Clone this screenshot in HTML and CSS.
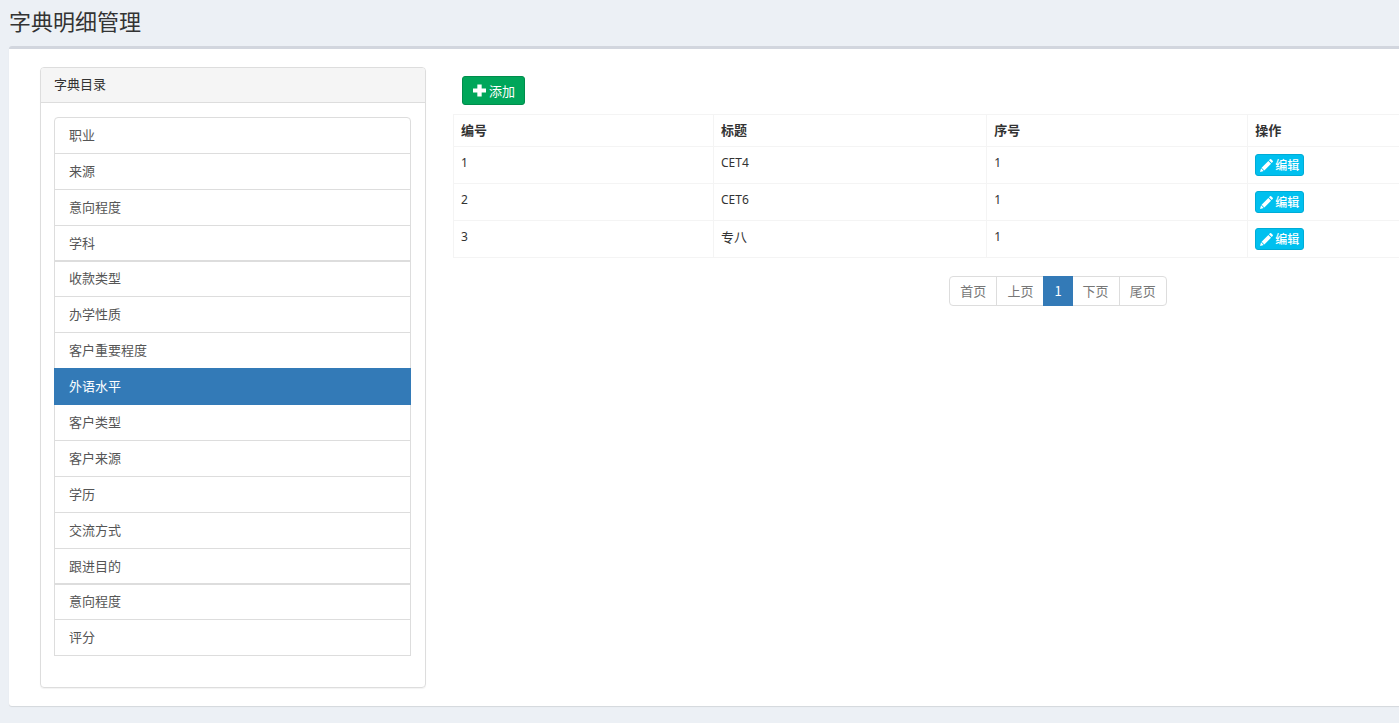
FILE: index.html
```html
<!DOCTYPE html>
<html lang="zh-CN">
<head>
<meta charset="utf-8">
<title>字典明细管理</title>
<link rel="stylesheet" href="styles.css">
</head>
<body>
<svg class="sprite" aria-hidden="true">
  <symbol id="plus" viewBox="0 0 12 12"><path d="M4 0.5h4v3.7h4v3.6H8v3.7H4V7.8H0V4.2h4z"/></symbol>
  <symbol id="pencil" viewBox="0 0 12 12"><path d="M9.200 .3a.8.8 0 0 1 1.100 0l1.400 1.400a.8.8 0 0 1 0 1.100l-.9.9-2.500-2.500zM7.700 1.800l2.500 2.500-6.200 6.200-2.500-2.500zM1 8.600l2.400 2.400L0 12z"/></symbol>
</svg>
<h1 class="page-title">字典明细管理</h1>
<main class="box">
  <section class="panel">
    <h2 class="panel-heading">字典目录</h2>
    <nav class="list-group">
      <a class="item" href="#">职业</a>
      <a class="item" href="#">来源</a>
      <a class="item" href="#">意向程度</a>
      <a class="item group-end" href="#">学科</a>
      <a class="item group-start" href="#">收款类型</a>
      <a class="item" href="#">办学性质</a>
      <a class="item" href="#">客户重要程度</a>
      <a class="item active" href="#">外语水平</a>
      <a class="item" href="#">客户类型</a>
      <a class="item" href="#">客户来源</a>
      <a class="item" href="#">学历</a>
      <a class="item" href="#">交流方式</a>
      <a class="item group-end" href="#">跟进目的</a>
      <a class="item group-start" href="#">意向程度</a>
      <a class="item" href="#">评分</a>
    </nav>
  </section>
  <section class="details">
    <button type="button" class="btn btn-add"><svg class="icon"><use href="#plus"/></svg>添加</button>
    <table class="table">
      <colgroup><col class="col-id"><col class="col-title"><col class="col-order"><col></colgroup>
      <thead>
        <tr><th>编号</th><th>标题</th><th>序号</th><th>操作</th></tr>
      </thead>
      <tbody>
        <tr><td>1</td><td>CET4</td><td>1</td><td><button type="button" class="btn btn-edit"><svg class="icon"><use href="#pencil"/></svg>编辑</button></td></tr>
        <tr><td>2</td><td>CET6</td><td>1</td><td><button type="button" class="btn btn-edit"><svg class="icon"><use href="#pencil"/></svg>编辑</button></td></tr>
        <tr><td>3</td><td class="cjk">专八</td><td>1</td><td><button type="button" class="btn btn-edit"><svg class="icon"><use href="#pencil"/></svg>编辑</button></td></tr>
      </tbody>
    </table>
    <nav class="pagination">
      <a class="page" href="#">首页</a>
      <a class="page" href="#">上页</a>
      <a class="page current" href="#">1</a>
      <a class="page" href="#">下页</a>
      <a class="page" href="#">尾页</a>
    </nav>
  </section>
</main>
</body>
</html>
```
FILE: styles.css
```css
* { box-sizing: border-box; }
body {
  margin: 0;
  padding: 0 0 16px 9px;
  background: #ecf0f5;
  color: #333;
  font: 13px/18px "Noto Sans CJK SC", sans-serif;
}
a { color: inherit; text-decoration: none; }
svg { fill: currentColor; }
.sprite { display: none; }
.page-title {
  margin: 0;
  padding: 7px 0 13px;
  font-size: 22px;
  line-height: 26px;
  font-weight: 400;
}
.box {
  display: flex;
  align-items: flex-start;
  gap: 27px;
  padding: 18px 0 18px 31px;
  background: #fff;
  border-top: 3px solid #d2d6de;
  border-radius: 3px 0 0 3px;
  box-shadow: 0 1px 1px rgba(0, 0, 0, .1);
}
.panel {
  flex: 0 0 386px;
  border: 1px solid #ddd;
  border-radius: 4px;
  box-shadow: 0 1px 1px rgba(0, 0, 0, .05);
}
.panel-heading {
  margin: 0;
  padding: 7px 13px 9px;
  background: #f5f5f5;
  border-bottom: 1px solid #ddd;
  border-radius: 3px 3px 0 0;
  font-size: 13px;
  line-height: 18px;
  font-weight: 400;
}
.list-group {
  display: flex;
  flex-direction: column;
  padding: 14px 14px 31px 13px;
}
.item {
  height: 37px;
  padding: 8px 14px;
  border: 1px solid #ddd;
  color: #555;
}
.item + .item { margin-top: -1px; }
.item:first-child { border-radius: 4px 4px 0 0; }
.item.group-end { height: 36px; }
.item.group-start { height: 36px; margin-top: 0; padding-top: 7px; }
.item.active {
  z-index: 1;
  background: #337ab7;
  border-color: #337ab7;
  color: #fff;
}
.details { flex: 1; min-width: 0; padding-top: 9px; }
.btn {
  display: flex;
  align-items: center;
  border: 1px solid;
  border-radius: 3px;
  color: #fff;
  font-family: inherit;
}
.btn-add {
  height: 29px;
  margin: 0 0 9px 9px;
  padding: 0 9px 1px 10px;
  gap: 3px;
  background: #00a65a;
  border-color: #008d4c;
  font-size: 13px;
}
.btn-edit {
  height: 22px;
  padding: 0 4px;
  gap: 2px;
  background: #00c0ef;
  border-color: #00acd6;
  font-size: 12px;
  font-weight: 500;
}
.icon { width: 13px; height: 13px; }
.table {
  width: 100%;
  table-layout: fixed;
  border-collapse: collapse;
}
.col-id { width: 27.5%; }
.col-title { width: 28.9%; }
.col-order { width: 27.6%; }
.table th, .table td {
  padding: 7px;
  border: 1px solid #f4f4f4;
  border-right: 0;
  text-align: left;
  vertical-align: top;
}
.table th { height: 32px; padding: 6px 7px; font-weight: 700; }
.table td { height: 37px; font-size: 12px; font-family: "Noto Sans", "Noto Sans CJK SC", sans-serif; }
.table td.cjk { font-size: 13px; }
.pagination {
  display: flex;
  justify-content: center;
  padding: 18px 0 0 264px;
}
.page {
  height: 30px;
  padding: 5px 10px;
  border: 1px solid #ddd;
  color: #777;
}
.page + .page { margin-left: -1px; }
.page:first-child { border-radius: 4px 0 0 4px; }
.page:last-child { border-radius: 0 4px 4px 0; }
.page.current {
  z-index: 1;
  background: #337ab7;
  border-color: #337ab7;
  color: #fff;
}
```
